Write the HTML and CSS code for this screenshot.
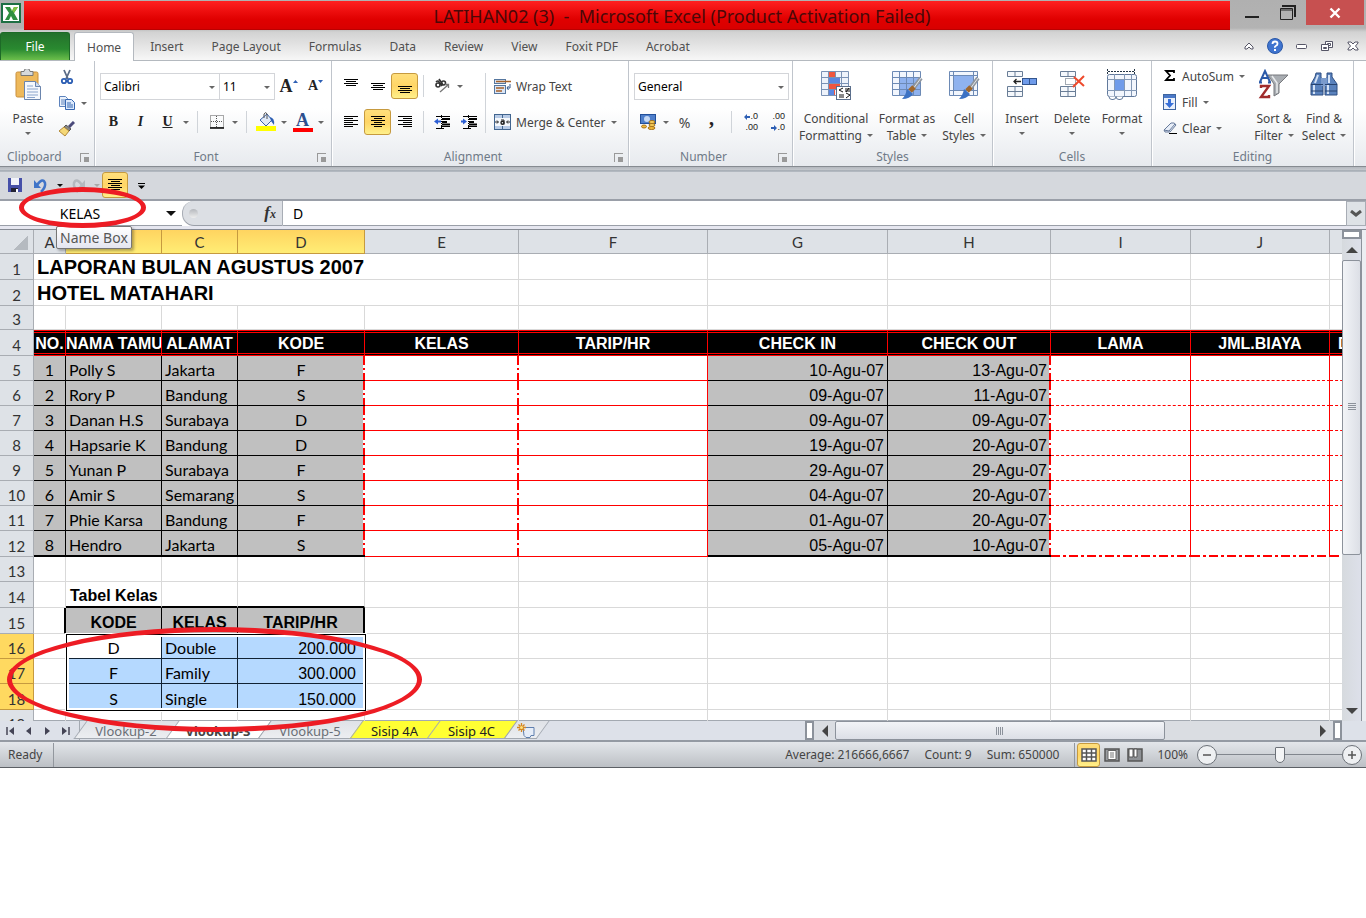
FILE: index.html
```html
<!DOCTYPE html>
<html lang="en">
<head>
    <meta charset="UTF-8">
    <meta name="viewport" content="width=device-width, initial-scale=1.0">
    <title>LATIHAN02 (3) - Microsoft Excel</title>
    <link rel="stylesheet" href="styles.css">
</head>
<body>
<div class="app">
    <header class="top">
        <div class="titlebar">
            <svg class="logo" width="24" height="24" viewBox="0 0 24 24"><rect x="2" y="4" width="18" height="18" fill="#fff" stroke="#1d7044" stroke-width="2"/><path d="M5 7h5l2 4 2-4h4l-4 6 4 7h-5l-2-4-2 4H5l4-7z" fill="#2f8f3f"/><path d="M10 7l2 4 2-4h4l-4 6z" fill="#7fc241"/></svg>
            <h1 class="title">LATIHAN02 (3)&nbsp; -&nbsp; Microsoft Excel (Product Activation Failed)</h1>
            <div class="window-buttons">
                <button class="win" aria-label="Minimize"><svg width="16" height="16"><path d="M1 12h14" stroke="#222" stroke-width="2"/></svg></button>
                <button class="win" aria-label="Restore"><svg width="16" height="16"><path d="M2 1h13v11" fill="none" stroke="#222" stroke-width="2"/><path d="M.5 3.500h12v11H.5zM0 5h12" fill="none" stroke="#222"/></svg></button>
                <button class="win close" aria-label="Close"><svg width="12" height="12"><path d="M1.500 1.500l9 9M10.500 1.500l-9 9" stroke="#fff" stroke-width="2.400"/></svg></button>
            </div>
        </div>
        <nav class="tabs">
            <button class="file">File</button>
            <button class="tab active">Home</button>
            <button class="tab">Insert</button>
            <button class="tab">Page Layout</button>
            <button class="tab">Formulas</button>
            <button class="tab">Data</button>
            <button class="tab">Review</button>
            <button class="tab">View</button>
            <button class="tab">Foxit PDF</button>
            <button class="tab">Acrobat</button>
            <div class="tab-tools">
                <button aria-label="Minimize ribbon"><svg width="10" height="8"><path d="M1 5l4-4 4 4v2H7L5 5 3 7H1z" fill="#fff" stroke="#556" /></svg></button>
                <button aria-label="Help"><svg width="16" height="16"><circle cx="8" cy="8" r="7.500" fill="#3f74cf" stroke="#2a58a8"/><path d="M5.500 6q0-2.500 2.500-2.500t2.500 2.200q0 1.300-1.500 2T8 9.700" fill="none" stroke="#fff" stroke-width="1.800"/><rect x="7" y="11" width="2" height="2" fill="#fff"/></svg></button>
                <button aria-label="Minimize window"><svg width="12" height="12"><rect x="1.500" y="4.500" width="10" height="4" rx="1" fill="#fff" stroke="#556"/></svg></button>
                <button aria-label="Restore window"><svg width="12" height="12"><path d="M4.500 1.500h7v6h-7z" fill="#fff" stroke="#556"/><path d="M6.500 3.500h3v2h-3z" fill="none" stroke="#556"/><path d="M.5 4.500h7v6h-7z" fill="#fff" stroke="#556"/><path d="M2.500 7.500h3v1h-3z" fill="none" stroke="#556"/></svg></button>
                <button aria-label="Close window"><svg width="12" height="12"><path d="M1 2h3l2 2 2-2h3v1L8.500 6 11 9v1H8L6 8l-2 2H1V9l2.500-3L1 3z" fill="#fff" stroke="#556"/></svg></button>
            </div>
        </nav>
    </header>

    <section class="ribbon">
        <div class="group g-clipboard">
            <div class="group-body">
                <button class="big">
                    <svg width="30" height="32" viewBox="0 0 30 32"><rect x="3" y="3" width="22" height="25" rx="1.500" fill="#eeb95b" stroke="#c98f3c"/><path d="M8 2.500h3a3 3 0 0 1 6 0h3v4H8z" fill="#d6d9dc" stroke="#777"/><path d="M11.500 12.500h11l5 5v13h-16z" fill="#f5f8fd" stroke="#6b85ad"/><path d="M22.500 12.500v5h5" fill="#cfdcf0" stroke="#6b85ad"/><path d="M14 17h6M14 20h11M14 23h11M14 26h11M14 28.500h8" stroke="#8aa4cc"/></svg>
                    <span>Paste</span><i class="caret"></i>
                </button>
                <div class="stack">
                    <button class="small" aria-label="Cut"><svg width="16" height="16"><path d="M5 1l4 9M11 1L7 10" stroke="#5a6b86" stroke-width="1.800"/><circle cx="5" cy="12" r="2.200" fill="none" stroke="#2d5fb4" stroke-width="1.800"/><circle cx="11" cy="12" r="2.200" fill="none" stroke="#2d5fb4" stroke-width="1.800"/></svg></button>
                    <button class="small" aria-label="Copy"><svg width="16" height="14"><path d="M.5.5h6l2 2v8h-8z" fill="#eaf1fb" stroke="#5d83bd"/><path d="M2 4h4M2 6h4M2 8h4" stroke="#5d83bd"/><path d="M6.500 3.500h6l3 3v7h-9z" fill="#dce9fb" stroke="#3566b0"/><path d="M8 7h4M8 9h6M8 11h6" stroke="#3566b0"/></svg><i class="caret"></i></button>
                    <button class="small" aria-label="Format Painter"><svg width="16" height="16"><path d="M15 1l-5 5" stroke="#4a4a7a" stroke-width="3"/><path d="M7 4l5 4-2 2-5-4z" fill="#888" stroke="#555"/><path d="M5 6l5 4-4 5-6-5z" fill="#f5d877" stroke="#b28a3a"/></svg></button>
                </div>
            </div>
            <div class="group-label"><span>Clipboard</span><button class="launcher" aria-label="Clipboard options"></button></div>
        </div>

        <div class="group g-font">
            <div class="group-body rows">
                <div class="row">
                    <label class="combo font-name"><select aria-label="Font"><option>Calibri</option></select></label>
                    <label class="combo font-size"><select aria-label="Font size"><option>11</option></select></label>
                    <button class="ib serif" aria-label="Grow font"><b class="grow">A</b><svg width="5" height="12"><path d="M0 3l2.500-3L5 3z" fill="#2d5fb4"/></svg></button>
                    <button class="ib serif" aria-label="Shrink font"><b class="shrink">A</b><svg width="5" height="12"><path d="M0 0h5L2.500 3z" fill="#2d5fb4"/></svg></button>
                </div>
                <div class="row">
                    <button class="ib serif"><b>B</b></button>
                    <button class="ib serif"><b><em>I</em></b></button>
                    <button class="ib serif"><b><u>U</u></b></button>
                    <button class="drop" aria-label="Underline styles"><i class="caret"></i></button>
                    <span class="sep"></span>
                    <button class="ib" aria-label="Borders"><svg width="14" height="14"><path d="M.5.5h13v12H.5zM6.500 1v11M1 6.500h12" fill="none" stroke="#555" stroke-dasharray="1 1"/><path d="M0 13h14" stroke="#000" stroke-width="1.500"/></svg></button>
                    <button class="drop" aria-label="Border styles"><i class="caret"></i></button>
                    <span class="sep"></span>
                    <button class="ib" aria-label="Fill color"><svg width="20" height="20"><path d="M4 8l7-6 5 6-6 6z" fill="#dfe9f8" stroke="#3a62a8"/><path d="M8 6V2q2-3 3 0v5" fill="none" stroke="#555"/><path d="M14 5q5 1 4 8l-3-4z" fill="#2d5fb4"/><rect y="14" width="20" height="5" fill="#ff0"/></svg></button>
                    <button class="drop" aria-label="Fill colors"><i class="caret"></i></button>
                    <button class="ib serif font-color" aria-label="Font color"><b>A</b></button>
                    <button class="drop" aria-label="Font colors"><i class="caret"></i></button>
                </div>
            </div>
            <div class="group-label"><span>Font</span><button class="launcher" aria-label="Font options"></button></div>
        </div>

        <div class="group g-align">
            <div class="group-body">
                <div class="rows">
                    <div class="row">
                        <button class="ib" aria-label="Top align"><svg width="14" height="18"><path d="M0 2.500h14M2 4.500h10M0 6.500h14M2 8.500h10" stroke="#000"/></svg></button>
                        <button class="ib" aria-label="Middle align"><svg width="14" height="18"><path d="M0 6.500h14M2 8.500h10M0 10.500h14M2 12.500h10" stroke="#000"/></svg></button>
                        <button class="ib on" aria-label="Bottom align"><svg width="14" height="18"><path d="M0 9.500h14M2 11.500h10M0 13.500h14M2 15.500h10" stroke="#000"/></svg></button>
                        <span class="sep"></span>
                        <button class="ib" aria-label="Orientation"><svg width="16" height="16"><circle cx="4" cy="7" r="2" fill="none" stroke="#333" stroke-width="1.600"/><path d="M2 4q2-2 3 0l3 4" fill="none" stroke="#333" stroke-width="1.600"/><circle cx="9.500" cy="5" r="2" fill="none" stroke="#333" stroke-width="1.600"/><path d="M5 1l4 6" stroke="#333" stroke-width="1.600"/><path d="M6 14l8-7M11 6.500h3.500V10" fill="none" stroke="#777" stroke-width="1.300"/></svg></button>
                        <button class="drop" aria-label="Orientation options"><i class="caret"></i></button>
                    </div>
                    <div class="row">
                        <button class="ib" aria-label="Align left"><svg width="14" height="14"><path d="M0 1.500h14M0 3.500h9M0 5.500h14M0 7.500h9M0 9.500h14M0 11.500h9" stroke="#000"/></svg></button>
                        <button class="ib on" aria-label="Align center"><svg width="14" height="14"><path d="M0 1.500h14M3 3.500h8M0 5.500h14M3 7.500h8M0 9.500h14M3 11.500h8" stroke="#000"/></svg></button>
                        <button class="ib" aria-label="Align right"><svg width="14" height="14"><path d="M0 1.500h14M5 3.500h9M0 5.500h14M5 7.500h9M0 9.500h14M5 11.500h9" stroke="#000"/></svg></button>
                        <span class="sep"></span>
                        <button class="ib" aria-label="Decrease indent"><svg width="16" height="14"><path d="M2 1.500h14M7 11.500h9M2 13.500h8" stroke="#000"/><path d="M8 4h8M8 7h5M8 9.500h8" stroke="#000" stroke-width="1.800"/><path d="M7.500 0v14" stroke="#000" stroke-dasharray="1 1"/><path d="M0 6.500l4-3v2h3v2H4v2z" fill="#2d5fd4"/></svg></button>
                        <button class="ib" aria-label="Increase indent"><svg width="16" height="14"><path d="M2 1.500h14M7 11.500h9M2 13.500h8" stroke="#000"/><path d="M8 4h8M8 7h5M8 9.500h8" stroke="#000" stroke-width="1.800"/><path d="M7.500 0v14" stroke="#000" stroke-dasharray="1 1"/><path d="M6 6.500l-4-3v2H0v2h2v2z" fill="#2d5fd4"/></svg></button>
                    </div>
                </div>
                <span class="sep tall"></span>
                <div class="rows">
                    <button class="small row"><svg width="17" height="16"><rect x=".5" y="1.500" width="11" height="4" fill="#dce6f5" stroke="#56779f"/><path d="M2 3.500h15" stroke="#a5622b" stroke-width="1.500"/><rect x=".5" y="7.500" width="11" height="8" fill="#dce6f5" stroke="#56779f"/><path d="M2 10h8M2 13h6" stroke="#a5622b" stroke-width="1.500"/><path d="M16 6v4h-3M14.500 8L13 10l1.500 2" fill="none" stroke="#33598e"/></svg>Wrap Text</button>
                    <button class="small row"><svg width="17" height="16"><rect x=".5" y=".5" width="16" height="15" fill="#b8cbe6" stroke="#41658f"/><path d="M8.500 0v16" stroke="#41658f"/><rect x="1" y="4" width="15" height="8" fill="#f5f8fc"/><path d="M1 8h3M13 8h3M3 6.500L4.500 8 3 9.500M14 6.500L12.500 8 14 9.500" stroke="#222" fill="none"/><circle cx="8.500" cy="8.700" r="1.500" fill="none" stroke="#222" stroke-width="1.400"/><path d="M7 6h3v4.500" fill="none" stroke="#222"/></svg>Merge &amp; Center<i class="caret"></i></button>
                </div>
            </div>
            <div class="group-label"><span>Alignment</span><button class="launcher" aria-label="Alignment options"></button></div>
        </div>

        <div class="group g-number">
            <div class="group-body rows">
                <div class="row"><label class="combo format"><select aria-label="Number format"><option>General</option></select></label></div>
                <div class="row">
                    <button class="ib" aria-label="Accounting format"><svg width="16" height="16"><rect x=".5" y=".5" width="15" height="9" fill="#4f7fcb" stroke="#23509a"/><circle cx="7" cy="5" r="3" fill="#c5d9f5"/><ellipse cx="11.500" cy="14" rx="3.500" ry="1.500" fill="#f0b83a" stroke="#a4721b"/><ellipse cx="12" cy="11" rx="3" ry="1.500" fill="#f7ce5b" stroke="#a4721b"/><ellipse cx="12" cy="8" rx="3" ry="1.500" fill="#f7ce5b" stroke="#a4721b"/><ellipse cx="4" cy="12.500" rx="2.500" ry="1.500" fill="#f0b83a" stroke="#a4721b"/></svg></button>
                    <button class="drop" aria-label="Currencies"><i class="caret"></i></button>
                    <button class="ib percent">%</button>
                    <button class="ib serif comma"><b>,</b></button>
                    <span class="sep"></span>
                    <button class="ib decimals"><span><svg width="6" height="6"><path d="M0 3l3-3v2h3v2H3v2z" fill="#2d5fb4"/></svg>.0</span><span>.00</span></button>
                    <button class="ib decimals"><span>.00</span><span><svg width="6" height="6"><path d="M6 3L3 0v2H0v2h3v2z" fill="#2d5fb4"/></svg>.0</span></button>
                </div>
            </div>
            <div class="group-label"><span>Number</span><button class="launcher" aria-label="Number options"></button></div>
        </div>

        <div class="group g-styles">
            <div class="group-body">
                <button class="big">
                    <svg width="32" height="32"><path d="M1.500 2.500h27v24h-27z" fill="#eef3fb"/><path d="M8 2h7v24H8z" fill="#f0563e"/><path d="M8 8h12v6H8z" fill="#5b87e0"/><path d="M8 15h12v5H8z" fill="#f0563e"/><path d="M8 21h6v6H8z" fill="#5b87e0"/><path d="M1.500 2.500h27v24h-27zM1 8.500h28M1 14.500h28M1 20.500h28M8.500 2v25M15.500 2v6M21.500 2v25" fill="none" stroke="#7a92b5"/><rect x="16.500" y="17.500" width="14" height="13" fill="#fff" stroke="#5b6f8c"/><path d="M23 19l-4 2 4 2M25 20h5M25 22h5M29 19l-3 4M19 26h5M19 28h5M26 24l4 2-4 3" fill="none" stroke="#111"/></svg>
                    <span>Conditional<br>Formatting<i class="caret"></i></span>
                </button>
                <button class="big">
                    <svg width="32" height="32"><path d="M1.500 2.500h28v24h-28z" fill="#f2f6fd"/><path d="M8 8h21v18H8z" fill="#8fb2ee"/><path d="M1.500 2.500h28v24h-28zM1 8.500h28M1 14.500h28M1 20.500h28M8.500 2v25M15.500 2v25M22.500 2v25" fill="none" stroke="#6d8ab5"/><path d="M30 9l-9 12" stroke="#9097a0" stroke-width="4"/><path d="M30 9l-8 11" stroke="#e4e7ea"/><path d="M23 18l-4 4" stroke="#a0672c" stroke-width="5"/><path d="M16 20l6 5q-3 5-11 5 4-4 5-10z" fill="#3c72c4"/></svg>
                    <span>Format as<br>Table<i class="caret"></i></span>
                </button>
                <button class="big">
                    <svg width="32" height="32"><path d="M1.500 2.500h28v24h-28z" fill="#f2f6fd" stroke="#6d8ab5"/><path d="M6 7h19v14H6z" fill="#8fb2ee"/><path d="M1 6.500h28M1 21.500h28M5.500 2v25M25.500 2v25" stroke="#6d8ab5"/><path d="M30 9l-9 12" stroke="#9097a0" stroke-width="4"/><path d="M30 9l-8 11" stroke="#e4e7ea"/><path d="M23 18l-4 4" stroke="#a0672c" stroke-width="5"/><path d="M16 20l6 5q-3 5-11 5 4-4 5-10z" fill="#3c72c4"/></svg>
                    <span>Cell<br>Styles<i class="caret"></i></span>
                </button>
            </div>
            <div class="group-label"><span>Styles</span></div>
        </div>

        <div class="group g-cells">
            <div class="group-body">
                <button class="big">
                    <svg width="32" height="32"><path d="M1.500 2.500h15v5h-15zM9 2v6M1.500 17.500h15v10h-15zM9 17v11M1 22.500h15" fill="#f5f8fc" stroke="#697d96"/><rect x="16.500" y="9.500" width="14" height="6" fill="#6f9bea" stroke="#33558d"/><path d="M23.500 9v7" stroke="#33558d"/><path d="M15 12.500H8M10.500 10L8 12.500l2.500 2.500" fill="none" stroke="#222" stroke-width="1.300"/></svg>
                    <span>Insert</span><i class="caret"></i>
                </button>
                <button class="big">
                    <svg width="32" height="32"><path d="M4.500 2.500h15v5h-15zM12 2v6M4.500 17.500h15v10h-15zM12 17v11M4 22.500h15" fill="#f5f8fc" stroke="#697d96"/><path d="M9.500 9.500h10v6h-10z" fill="none" stroke="#456" stroke-dasharray="1 1"/><path d="M18 8l10 9M28 7L17 18" stroke="#ee4a2c" stroke-width="2"/></svg>
                    <span>Delete</span><i class="caret"></i>
                </button>
                <button class="big">
                    <svg width="32" height="32"><path d="M2 2.500h26M1.500 0v5M28.500 0v5" stroke="#234" stroke-dasharray="2 1"/><rect x="1.500" y="5.500" width="29" height="22" rx="2" fill="#f2f6fd" stroke="#61799b"/><path d="M1 10.500h30M1 21.500h30M8.500 5v22M18.500 5v22M25.500 5v22" stroke="#8398b5"/><path d="M9 11h9v10H9z" fill="#6f9bea"/><path d="M3 27.500q0 3 3 3h1q3 0 3-3M10 27.500q0 3 3 3h1q3 0 3-3" fill="#fff" stroke="#61799b"/></svg>
                    <span>Format</span><i class="caret"></i>
                </button>
            </div>
            <div class="group-label"><span>Cells</span></div>
        </div>

        <div class="group g-editing">
            <div class="group-body">
                <div class="stack">
                    <button class="small"><svg width="14" height="14"><path d="M11 4V2H3l4 4.500L3 11h8V9" fill="none" stroke="#000" stroke-width="1.800"/></svg>AutoSum<i class="caret"></i></button>
                    <button class="small"><svg width="14" height="16"><rect x=".5" y=".5" width="12" height="15" fill="#e9f0fb" stroke="#3e659f"/><rect x="1" y="1" width="11" height="3" fill="#4b79c8"/><path d="M5 5h3v4h3l-4.500 5L2 9h3z" fill="#3870d8"/></svg>Fill<i class="caret"></i></button>
                    <button class="small"><svg width="14" height="14"><path d="M1 9l7-7q4-1 5 2L7 11H2z" fill="#e8eef8" stroke="#66799a"/><path d="M1 9l5 1 6-7" fill="none" stroke="#66799a"/><path d="M6 12.500h8" stroke="#000"/></svg>Clear<i class="caret"></i></button>
                </div>
                <button class="big">
                    <svg width="32" height="32"><path d="M10 6h20l-9 9v9l-5 3V15z" fill="#a9adb2" stroke="#77797d"/><path d="M14 7l5 7v10" fill="none" stroke="#e9ebed" stroke-width="1.500"/><path d="M2 13L7 2l5 11M4 9h6M1 13.500h3M10 13.500h3" fill="none" stroke="#2c5aa8" stroke-width="2"/><path d="M3 19v-2h8L3 28h8v-2" fill="none" stroke="#a02c2c" stroke-width="2.400"/></svg>
                    <span>Sort &amp;<br>Filter<i class="caret"></i></span>
                </button>
                <button class="big">
                    <svg width="32" height="32"><path d="M8 4h5v4l2 7v11H3V15l4-7zM19 4h5v4l5 7v11H17V15l2-7z" fill="#5a82bd" stroke="#2f4f82"/><path d="M13 9h6v8h-6z" fill="#7b9bcc"/><path d="M6 16v9M20 16v9M10 6l-3 8M21 6v8" stroke="#d5e3f6" stroke-width="2"/><path d="M3 15.500h12M17 15.500h12M3 22h12M17 22h12" stroke="#27436f"/></svg>
                    <span>Find &amp;<br>Select<i class="caret"></i></span>
                </button>
            </div>
            <div class="group-label"><span>Editing</span></div>
        </div>
    </section>

    <div class="quick">
        <button aria-label="Save"><svg width="16" height="16"><path d="M1 1h14v14H1z" fill="#4650a8"/><path d="M4 1h8v7H4z" fill="#f2f4fb"/><path d="M4 11h7v4H4z" fill="#223"/><path d="M9 12h2v3H9z" fill="#fff"/></svg></button>
        <button aria-label="Undo"><svg width="16" height="16"><path d="M4 8q6-8 8-2 1 4-4 9" fill="none" stroke="#3f74c8" stroke-width="2.500"/><path d="M1 3v8h7z" fill="#3f74c8"/></svg></button>
        <button class="drop" aria-label="Undo list"><i class="caret dark"></i></button>
        <button aria-label="Redo"><svg width="16" height="16"><path d="M12 8Q6 0 4 6q-1 4 4 9" fill="none" stroke="#b5b9bf" stroke-width="2.500"/><path d="M15 3v8H8z" fill="#b5b9bf"/></svg></button>
        <button class="drop" aria-label="Redo list"><i class="caret faint"></i></button>
        <button class="on" aria-label="Center"><svg width="16" height="14"><path d="M1 1.500h14M4 3.500h9M1 5.500h14M4 7.500h9M1 9.500h14M4 11.500h9" stroke="#000"/></svg></button>
        <button aria-label="Customize toolbar"><svg width="7" height="7"><path d="M0 1.500h7" stroke="#000"/><path d="M0 3.500h7L3.500 7z"/></svg></button>
    </div>

    <div class="formula-bar">
        <input class="name-box" type="text" value="KELAS" aria-label="Name Box">
        <button class="name-drop" aria-label="Names"><i class="caret dark wide"></i></button>
        <div class="fx"><i class="knob"></i><button aria-label="Insert function"><em>f<small>x</small></em></button></div>
        <input class="formula" type="text" value="D" aria-label="Formula">
        <button class="expand" aria-label="Expand formula bar"><svg width="12" height="8"><path d="M1 1l5 4 5-4" fill="none" stroke="#555" stroke-width="3"/></svg></button>
        <div class="tooltip">Name Box</div>
        <div class="ring ring-name"></div>
    </div>

    <main class="workspace">
        <div class="sheet">
            <table>
                <colgroup><col class="w-head"><col class="w-a"><col class="w-b"><col class="w-c"><col class="w-d"><col class="w-e"><col class="w-f"><col class="w-g"><col class="w-h"><col class="w-i"><col class="w-j"><col class="w-k"></colgroup>
                <thead>
                    <tr><th class="corner"></th><th>A</th><th class="sel"></th><th class="sel">C</th><th class="sel">D</th><th>E</th><th>F</th><th>G</th><th>H</th><th>I</th><th>J</th><th></th></tr>
                </thead>
                <tbody>
                    <tr class="tall"><th>1</th><td class="heading" colspan="5">LAPORAN BULAN AGUSTUS 2007</td><td></td><td></td><td></td><td></td><td></td><td></td></tr>
                    <tr class="tall"><th>2</th><td class="heading" colspan="5">HOTEL MATAHARI</td><td></td><td></td><td></td><td></td><td></td><td></td></tr>
                    <tr class="short"><th>3</th><td></td><td></td><td></td><td></td><td></td><td></td><td></td><td></td><td></td><td></td><td></td></tr>
                    <tr class="titles"><th>4</th><td>NO.</td><td>NAMA TAMU</td><td>ALAMAT</td><td>KODE</td><td>KELAS</td><td>TARIP/HR</td><td>CHECK IN</td><td>CHECK OUT</td><td>LAMA</td><td>JML.BIAYA</td><td class="cut">D</td></tr>
                    <tr class="guest"><th>5</th><td>1</td><td>Polly S</td><td>Jakarta</td><td>F</td><td></td><td></td><td>10-Agu-07</td><td>13-Agu-07</td><td></td><td></td><td></td></tr>
                    <tr class="guest"><th>6</th><td>2</td><td>Rory P</td><td>Bandung</td><td>S</td><td></td><td></td><td>09-Agu-07</td><td>11-Agu-07</td><td></td><td></td><td></td></tr>
                    <tr class="guest"><th>7</th><td>3</td><td>Danan H.S</td><td>Surabaya</td><td>D</td><td></td><td></td><td>09-Agu-07</td><td>09-Agu-07</td><td></td><td></td><td></td></tr>
                    <tr class="guest"><th>8</th><td>4</td><td>Hapsarie K</td><td>Bandung</td><td>D</td><td></td><td></td><td>19-Agu-07</td><td>20-Agu-07</td><td></td><td></td><td></td></tr>
                    <tr class="guest"><th>9</th><td>5</td><td>Yunan P</td><td>Surabaya</td><td>F</td><td></td><td></td><td>29-Agu-07</td><td>29-Agu-07</td><td></td><td></td><td></td></tr>
                    <tr class="guest"><th>10</th><td>6</td><td>Amir S</td><td>Semarang</td><td>S</td><td></td><td></td><td>04-Agu-07</td><td>20-Agu-07</td><td></td><td></td><td></td></tr>
                    <tr class="guest"><th>11</th><td>7</td><td>Phie Karsa</td><td>Bandung</td><td>F</td><td></td><td></td><td>01-Agu-07</td><td>20-Agu-07</td><td></td><td></td><td></td></tr>
                    <tr class="guest last tall"><th>12</th><td>8</td><td>Hendro</td><td>Jakarta</td><td>S</td><td></td><td></td><td>05-Agu-07</td><td>10-Agu-07</td><td></td><td></td><td></td></tr>
                    <tr><th>13</th><td></td><td></td><td></td><td></td><td></td><td></td><td></td><td></td><td></td><td></td><td></td></tr>
                    <tr class="caption tall"><th>14</th><td></td><td>Tabel Kelas</td><td></td><td></td><td></td><td></td><td></td><td></td><td></td><td></td><td></td></tr>
                    <tr class="class-titles tall"><th>15</th><td></td><td>KODE</td><td>KELAS</td><td>TARIP/HR</td><td></td><td></td><td></td><td></td><td></td><td></td><td></td></tr>
                    <tr class="class-row"><th class="sel">16</th><td></td><td class="current">D</td><td>Double</td><td>200.000</td><td></td><td></td><td></td><td></td><td></td><td></td><td></td></tr>
                    <tr class="class-row"><th class="sel">17</th><td></td><td>F</td><td>Family</td><td>300.000</td><td></td><td></td><td></td><td></td><td></td><td></td><td></td></tr>
                    <tr class="class-row tall"><th class="sel">18</th><td></td><td>S</td><td>Single</td><td>150.000</td><td></td><td></td><td></td><td></td><td></td><td></td><td></td></tr>
                    <tr><th>19</th><td></td><td></td><td></td><td></td><td></td><td></td><td></td><td></td><td></td><td></td><td></td></tr>
                </tbody>
            </table>
            <div class="selection"></div>
        </div>
        <div class="vscroll">
            <span class="split"></span>
            <button aria-label="Scroll up"><i class="arrow up"></i></button>
            <div class="thumb"><i class="grip"></i></div>
            <span class="track"></span>
            <button aria-label="Scroll down"><i class="arrow down"></i></button>
        </div>
        <div class="ring ring-table"></div>
    </main>

    <div class="sheet-bar">
        <div class="sheet-nav">
            <button aria-label="First sheet"><svg width="8" height="8"><path d="M1 0v8" stroke="#445" stroke-width="1.500"/><path d="M8 0v8L3 4z" fill="#445"/></svg></button>
            <button aria-label="Previous sheet"><svg width="8" height="8"><path d="M6 0v8L1 4z" fill="#445"/></svg></button>
            <button aria-label="Next sheet"><svg width="8" height="8"><path d="M2 0v8l5-4z" fill="#445"/></svg></button>
            <button aria-label="Last sheet"><svg width="8" height="8"><path d="M7 0v8" stroke="#445" stroke-width="1.500"/><path d="M0 0v8l5-4z" fill="#445"/></svg></button>
        </div>
        <div class="sheet-tabs">
            <button class="wide">Vlookup-2</button>
            <button class="wide current">Vlookup-3</button>
            <button class="wide">Vlookup-5</button>
            <button class="yellow">Sisip 4A</button>
            <button class="yellow">Sisip 4C</button>
            <button class="new" aria-label="Insert sheet"><svg width="18" height="16"><path d="M6 4.500h11v8h-3l-1 2H9l-2-2z" fill="#e6edf8" stroke="#5f7fae"/><path d="M4.500 0v9M0 4.500h9M1.500 1.500l6 6M7.500 1.500l-6 6" stroke="#d6861f" stroke-width="1.300"/><circle cx="4.500" cy="4.500" r="1.500" fill="#ffe27a"/></svg></button>
        </div>
        <div class="hscroll">
            <span class="split"></span>
            <button aria-label="Scroll left"><i class="arrow left"></i></button>
            <div class="thumb"><i class="grip"></i></div>
            <span class="track"></span>
            <button aria-label="Scroll right"><i class="arrow right"></i></button>
            <span class="split"></span>
        </div>
    </div>

    <footer class="status">
        <span class="ready">Ready</span>
        <span class="stat">Average: 216666,6667</span>
        <span class="stat">Count: 9</span>
        <span class="stat">Sum: 650000</span>
        <div class="views">
            <button class="on" aria-label="Normal"><svg width="16" height="14"><path d="M1 1h14v12H1zM1 5h14M1 9h14M5.500 1v12M10.500 1v12" fill="#fff" stroke="#555" stroke-width="1.500"/></svg></button>
            <button aria-label="Page layout"><svg width="16" height="14"><path d="M1 1h14v12H1z" fill="#9a9da1" stroke="#555" stroke-width="1.500"/><path d="M4 2.500h8v9H4z" fill="#fff" stroke="#666"/><path d="M6 5h4M6 7h4M6 9h4" stroke="#777"/></svg></button>
            <button aria-label="Page break"><svg width="16" height="14"><path d="M1 1h14v12H1z" fill="#8e9195" stroke="#555" stroke-width="1.500"/><path d="M2 1h4v8H2zM7 1h3v8H7z" fill="#fff" stroke="#555"/></svg></button>
        </div>
        <span class="zoom">100%</span>
        <button class="round" aria-label="Zoom out"><svg width="10" height="10"><path d="M1 5h8" stroke="#555" stroke-width="1.500"/></svg></button>
        <input class="slider" type="range" min="0" max="100" value="50" aria-label="Zoom">
        <button class="round" aria-label="Zoom in"><svg width="10" height="10"><path d="M1 5h8M5 1v8" stroke="#555" stroke-width="1.500"/></svg></button>
    </footer>
</div>
</body>
</html>
```
FILE: styles.css
```css
* {
    box-sizing: border-box;
}

body {
    margin: 0;
    background: #fff;
    font-family: "Noto Sans", sans-serif;
    font-size: 12px;
    color: #444;
}

button {
    display: flex;
    align-items: center;
    justify-content: center;
    padding: 0;
    border: 0;
    background: none;
    font: inherit;
    color: inherit;
    white-space: nowrap;
}

svg {
    display: block;
    flex: none;
}

.app {
    overflow: hidden;
}

/* title bar and ribbon tabs */
.top {
    background: linear-gradient(#b0b0b0 0, #b3b3b3 28px, #d2d2d2 32px, #f7f7f7 60px);
}

.titlebar {
    display: flex;
    height: 31px;
}

.title {
    flex: 1;
    height: 29px;
    margin: 1px 0 0;
    background: linear-gradient(#ff2020, #e00000 65%, #d80000);
    border-bottom: 1px solid #b00;
    color: #4a0808;
    font-size: 18px;
    font-weight: 400;
    line-height: 30px;
    text-align: center;
    white-space: nowrap;
    padding-left: 110px;
}

.window-buttons {
    display: flex;
    width: 136px;
    padding-left: 4px;
}

.win {
    width: 36px;
    height: 25px;
}

.win.close {
    width: 58px;
    background: #c75050;
}

.tabs {
    display: flex;
    height: 30px;
    padding-top: 1px;
    border-bottom: 1px solid #b4b9bf;
    color: #505050;
}

.file {
    width: 70px;
    margin-right: 4px;
    background: linear-gradient(#23702b, #2a8a30 60%, #6cbf4b);
    border: 1px solid #1d6a27;
    border-bottom: 0;
    border-radius: 3px 3px 0 0;
    color: #fff;
}

.tab {
    padding: 0 14px;
}

.tab.active {
    margin: 0 2px -1px 0;
    padding: 0 12px;
    background: #fff;
    border: 1px solid #b4b9bf;
    border-bottom: 0;
    border-radius: 3px 3px 0 0;
}

.tab-tools {
    display: flex;
    margin-left: auto;
}

.tab-tools button {
    width: 26px;
}

/* ribbon */
.ribbon {
    display: flex;
    height: 106px;
    background: linear-gradient(#fff 0, #fff 45%, #e7eaee 100%);
    border-bottom: 1px solid #868b91;
    white-space: nowrap;
}

.group {
    display: flex;
    flex: none;
    flex-direction: column;
    border-right: 1px solid #c0c5cc;
    box-shadow: 1px 0 #fff;
}

.g-clipboard { width: 95px; }
.g-font { width: 237px; }
.g-align { width: 297px; }
.g-number { width: 164px; }
.g-styles { width: 200px; }
.g-cells { width: 159px; }
.g-editing { width: 202px; }

.group-body {
    display: flex;
    flex: 1;
    padding-left: 5px;
}

.group-label {
    display: flex;
    align-items: center;
    height: 20px;
    color: #6f7a87;
}

.group-label span {
    flex: 1;
    text-align: center;
}

.g-clipboard .group-label span {
    padding-left: 7px;
    text-align: left;
}

.launcher {
    width: 9px;
    height: 9px;
    margin: 2px 5px 0 0;
    border: solid #999;
    border-width: 1px 0 0 1px;
    background: linear-gradient(#999, #999) right bottom / 5px 5px no-repeat;
}

.rows {
    display: flex;
    flex-direction: column;
    gap: 10px;
    padding-top: 12px;
}

.row {
    display: flex;
    align-items: center;
    height: 26px;
}

.ib {
    width: 27px;
    height: 26px;
    border: 1px solid transparent;
    border-radius: 3px;
}

.on {
    background: linear-gradient(#ffdf7c, #ffd566 50%, #fff08a);
    border: 1px solid #c69a3f;
    border-radius: 3px;
}

.drop {
    width: 10px;
    height: 26px;
}

.caret {
    flex: none;
    border: 3px solid transparent;
    border-top-color: #666;
    border-bottom: 0;
}

.caret.dark { border-top-color: #111; }
.caret.faint { border-top-color: #aaa; }

.caret.wide {
    border-width: 5px;
    border-bottom: 0;
}

.sep {
    width: 12px;
    height: 22px;
    background: linear-gradient(#d0d4d9, #d0d4d9) center / 1px 100% no-repeat;
}

.g-align .sep {
    width: 10px;
}

.g-align .sep.tall {
    width: 6px;
    height: 60px;
    margin: 12px 6px 0 0;
}

.combo {
    position: relative;
    flex: none;
    height: 27px;
    border: 1px solid #d3d5d9;
    background: #fff;
}

.combo::after {
    content: "";
    position: absolute;
    right: 4px;
    top: 12px;
    border: 3px solid transparent;
    border-top-color: #666;
    border-bottom: 0;
}

.combo select {
    appearance: none;
    width: 100%;
    height: 25px;
    padding: 0 3px;
    border: 0;
    background: none;
    color: #000;
    font: inherit;
}

.font-name { width: 120px; }

.font-size {
    width: 55px;
    border-left: 0;
}

.format { width: 155px; }

.serif {
    font-family: "Liberation Serif", serif;
    font-size: 14px;
    color: #222;
}

.grow { font-size: 18px; }
.shrink { font-size: 14px; }

.font-color b {
    width: 20px;
    border-bottom: 4px solid #f00;
    color: #2d4f8e;
    font-size: 18px;
    line-height: 16px;
}

.percent {
    font-size: 14px;
}

.comma {
    font-size: 20px;
    line-height: 10px;
    padding-bottom: 8px;
}

.decimals {
    flex-direction: column;
    align-items: flex-end;
    padding-right: 5px;
    font-family: "Liberation Sans", Arial, sans-serif;
    font-size: 9px;
    line-height: 11px;
    color: #222;
}

.decimals span {
    display: flex;
    align-items: center;
}

.big {
    flex-direction: column;
    justify-content: flex-start;
    width: 50px;
    padding-top: 8px;
    line-height: 17px;
}

.big span {
    padding-top: 9px;
}

.big span .caret {
    display: inline-block;
    margin-left: 5px;
    vertical-align: 3px;
}

.big > .caret {
    margin-top: 5px;
}

.g-clipboard .big {
    width: 46px;
}

.stack {
    display: flex;
    flex-direction: column;
    padding-top: 3px;
}

.small {
    justify-content: flex-start;
    height: 26px;
    gap: 5px;
}

.g-clipboard .stack {
    padding: 3px 0 0 8px;
}

.g-clipboard .small {
    gap: 6px;
}

.g-styles .group-body {
    padding-left: 7px;
}

.g-styles .big { width: 72px; }
.g-styles .big:nth-child(2) { width: 70px; }
.g-styles .big:nth-child(3) { width: 44px; }

.g-cells .group-body {
    padding-left: 4px;
}

.g-editing .stack {
    width: 92px;
    padding: 2px 0 0 6px;
}

/* quick access toolbar */
.quick {
    display: flex;
    align-items: center;
    height: 34px;
    padding: 4px 0 0 2px;
    background: linear-gradient(#b3b7bd 0, #c4c8cd 3px, #8f98a2 4px, #d5d8dd 5px);
    border-bottom: 2px solid #9a9fa8;
}

.quick button {
    width: 26px;
    height: 26px;
}

.quick .drop {
    width: 11px;
}

/* formula bar */
.formula-bar {
    position: relative;
    display: flex;
    height: 29px;
    border-bottom: 1px solid #868b94;
    background: linear-gradient(#e6e7f0, #e6e7f0) bottom / 100% 3px no-repeat;
}

.formula-bar > input,
.formula-bar > button,
.fx {
    height: 25px;
    border: 0;
    border-bottom: 1px solid #9a9fa8;
    background: #fff;
}

.name-box {
    width: 160px;
    padding: 0;
    font: 14px "Noto Sans", sans-serif;
    text-align: center;
    color: #000;
}

.name-drop {
    width: 22px;
}

.formula-bar .fx {
    display: flex;
    align-items: center;
    justify-content: space-between;
    width: 101px;
    padding: 0 6px;
    background: #dcdfe4;
    border-left: 1px solid #a8adb5;
    border-right: 1px solid #a8adb5;
    border-radius: 12px 0 0 12px;
}

.fx button {
    font: bold 17px "Liberation Serif", serif;
    color: #333;
}

.fx small {
    font-size: 12px;
}

.knob {
    width: 9px;
    height: 9px;
    border-radius: 50%;
    background: linear-gradient(#b5b8bd, #eee);
}

.formula-bar .formula {
    flex: 1;
    min-width: 0;
    padding: 0 10px;
    font: 14px "Noto Sans", sans-serif;
    color: #000;
}

.formula-bar .expand {
    width: 20px;
    background: #dee2e6;
    border: 1px solid #a8adb5;
}

.tooltip {
    position: absolute;
    z-index: 2;
    left: 56px;
    top: 25px;
    padding: 0 3px;
    background: linear-gradient(#fff, #e4e5f0);
    border: 1px solid #767676;
    border-radius: 2px;
    box-shadow: 2px 2px 3px rgba(0, 0, 0, 0.3);
    color: #575757;
    font-size: 14px;
    line-height: 21px;
    white-space: nowrap;
}

.ring {
    position: absolute;
    z-index: 3;
    border: 5px solid #ed1c24;
    border-radius: 50%;
    pointer-events: none;
}

.ring-name {
    left: 19px;
    top: -14px;
    width: 127px;
    height: 41px;
}

.ring-table {
    left: 7px;
    top: 397px;
    width: 415px;
    height: 105px;
}

/* worksheet */
.workspace {
    position: relative;
    display: flex;
    height: 491px;
}

.sheet {
    position: relative;
    flex: 1;
    min-width: 0;
    overflow: hidden;
}

table {
    width: 1394px;
    table-layout: fixed;
    border-collapse: separate;
    border-spacing: 0;
    font-family: Lato, sans-serif;
    font-size: 16px;
    line-height: 20px;
    color: #000;
}

.w-head { width: 34px; }
.w-a { width: 32px; }
.w-b { width: 96px; }
.w-c { width: 76px; }
.w-d { width: 127px; }
.w-e { width: 154px; }
.w-f { width: 189px; }
.w-g { width: 180px; }
.w-h { width: 163px; }
.w-i { width: 140px; }
.w-j { width: 139px; }
.w-k { width: 64px; }

tr { height: 25px; }
tr.tall { height: 26px; }
tr.short { height: 24px; }
thead tr { height: 24px; }

td,
th {
    padding: 0 3px;
    border: solid #d9d9d9;
    border-width: 0 1px 1px 0;
    overflow: hidden;
    white-space: nowrap;
    vertical-align: bottom;
}

th {
    padding: 0;
    background: #dee2e7;
    border-color: #a9adb3;
    color: #333;
    font-size: 15px;
    font-weight: 400;
    text-align: center;
}

thead th {
    vertical-align: middle;
}

th.sel {
    background: #ffd960;
    border-color: #c69a3f;
}

thead th.sel {
    background: linear-gradient(#ffd460, #ffed75);
}

.corner {
    background: linear-gradient(135deg, transparent 50%, #b5bac0 50%) 14px 6px / 14px 14px no-repeat #dee2e7;
}

.heading,
.titles td,
.caption td,
.class-titles td {
    font-family: "Liberation Sans", Arial, sans-serif;
    font-weight: 700;
}

.heading {
    font-size: 20px;
    line-height: 24px;
    vertical-align: middle;
}

.titles {
    height: 26px;
}

.titles td {
    padding: 2px 0 0;
    background: #000;
    border-color: #f00;
    border-style: double solid double solid;
    border-width: 3px 1px 3px 0;
    color: #fff;
    font-size: 16px;
    line-height: 18px;
    text-align: center;
    vertical-align: middle;
}

.titles td.cut {
    padding-left: 8px;
    text-align: left;
}

/* guest rows: filled columns are grey, the others wait for formulas */
.guest td {
    background-color: #c0c0c0;
    border-color: #000;
}

.guest td:nth-child(2),
.guest td:nth-child(5) {
    text-align: center;
}

.guest td:nth-child(6),
.guest td:nth-child(7),
.guest td:nth-child(n+10) {
    background-color: #fff;
    border-color: #f00;
}

.guest td:nth-child(n+10) {
    border-bottom-style: dashed;
}

.guest td:nth-child(8),
.guest td:nth-child(9) {
    font-family: "Liberation Sans", Arial, sans-serif;
    line-height: 18px;
    text-align: right;
}

.guest td:nth-child(5),
.guest td:nth-child(6),
.guest td:nth-child(9) {
    padding-right: 4px;
    border-right: 0;
    background-image: repeating-linear-gradient(#f00 0 9px, #fff 9px 12px, #f00 12px 14px, #fff 14px 17px);
    background-position: right;
    background-repeat: no-repeat;
    background-size: 2px 100%;
}

.guest.last td {
    border-bottom-width: 2px;
}

.guest.last td:nth-child(6),
.guest.last td:nth-child(7) {
    border-bottom-width: 1px;
}

.guest.last td:nth-child(n+10) {
    border-bottom: 0;
    background-image: repeating-linear-gradient(90deg, #f00 0 9px, #fff 9px 12px, #f00 12px 15px, #fff 15px 18px);
    background-position: bottom;
    background-repeat: no-repeat;
    background-size: 100% 2px;
}

/* class lookup table */
.caption td {
    padding-left: 4px;
}

.caption td:nth-child(3),
.caption td:nth-child(4),
.caption td:nth-child(5) {
    border-bottom: 2px solid #000;
}

.class-titles td:nth-child(3),
.class-titles td:nth-child(4),
.class-titles td:nth-child(5) {
    background: #c0c0c0;
    border-right-color: #000;
    text-align: center;
}

.class-titles td:nth-child(2) {
    border-right: 2px solid #000;
}

.class-titles td:nth-child(5) {
    border-right-width: 2px;
}

.class-row td:nth-child(3),
.class-row td:nth-child(4),
.class-row td:nth-child(5) {
    background: #b5d9ff;
    border-color: #123;
}

.class-row td:nth-child(3) {
    text-align: center;
}

.class-row td:nth-child(5) {
    padding-right: 8px;
    font-family: "Liberation Sans", Arial, sans-serif;
    line-height: 18px;
    text-align: right;
}

.class-row td.current:nth-child(3) {
    background: #fff;
}

.selection {
    position: absolute;
    left: 66px;
    top: 404px;
    width: 300px;
    height: 77px;
    border: 1px solid #000;
    box-shadow: 0 0 0 1px #fff, inset 0 0 0 2px #fff;
}

/* scroll bars */
.vscroll {
    display: flex;
    flex-direction: column;
    width: 24px;
    padding-right: 4px;
    background: linear-gradient(90deg, #d6dade, #dde0ea 19px, #8c929b 19px, #8c929b 20px, #eceef2 20px);
}

.split {
    flex: none;
    width: 9px;
    height: 19px;
    background: #fff;
    border: 2px solid #8c929b;
}

.vscroll .split {
    width: 19px;
    height: 9px;
}

.vscroll button {
    width: 19px;
    height: 21px;
}

.track {
    flex: 1;
}

.thumb {
    display: flex;
    align-items: center;
    justify-content: center;
    border: 1px solid #8c929b;
    border-radius: 2px;
}

.vscroll .thumb {
    width: 19px;
    height: 60%;
    background: linear-gradient(90deg, #f2f4f7, #dcdfe6);
}

.grip {
    width: 8px;
    height: 8px;
    background: repeating-linear-gradient(#8c929b 0 1px, transparent 1px 2px);
}

.hscroll .grip {
    background: repeating-linear-gradient(90deg, #8c929b 0 1px, transparent 1px 2px);
}

.arrow {
    border: 6px solid transparent;
}

.arrow.up { border-top: 0; border-bottom-color: #444; }
.arrow.down { border-bottom: 0; border-top-color: #444; }
.arrow.left { border-left: 0; border-right-color: #444; }
.arrow.right { border-right: 0; border-left-color: #444; }

.sheet-bar {
    display: flex;
    height: 22px;
    background: #dde1e9;
    border-top: 1px solid #a3a9b1;
    border-bottom: 2px solid #949aa3;
    margin-top: -1px;
}

.sheet-nav {
    display: flex;
    width: 80px;
    padding: 0 4px 0 1px;
    border-right: 1px solid #a3a9b1;
}

.sheet-nav button {
    flex: 1;
}

.sheet-tabs {
    display: flex;
    color: #6a6f76;
    font-size: 13px;
}

/* the slanted shape sits behind the upright label */
.sheet-tabs button {
    position: relative;
    z-index: 0;
    width: 77px;
}

.sheet-tabs button::before {
    content: "";
    position: absolute;
    z-index: -1;
    inset: 0 -1px 1px 0;
    background: linear-gradient(#dfe2e7, #eceef1);
    border: solid #a3a9b1;
    border-width: 0 1px 1px;
    transform: skewX(-36deg);
}

.sheet-tabs button.wide {
    width: 92px;
}

.sheet-tabs .current {
    color: #444;
    font-weight: 700;
}

.sheet-tabs .current::before {
    background: #fff;
}

.sheet-tabs .yellow {
    color: #222;
}

.sheet-tabs .yellow::before {
    background: #ff3;
}

.sheet-tabs .new {
    width: 32px;
}

.hscroll {
    display: flex;
    width: 537px;
    margin: 0 24px 0 auto;
    background: #dadde2;
}

.hscroll button {
    width: 21px;
}

.hscroll .thumb {
    width: 330px;
    background: linear-gradient(#f2f4f7, #dcdfe6);
}

/* status bar */
.status {
    display: flex;
    align-items: center;
    height: 26px;
    padding-right: 4px;
    background: linear-gradient(#e3e6ea, #bcc0c5);
    border-bottom: 1px solid #5c6065;
}

.ready {
    width: 54px;
    padding-left: 8px;
    margin-right: auto;
    border-right: 1px solid #92979e;
    line-height: 24px;
}

.stat {
    padding-right: 15px;
}

.views {
    display: flex;
    padding-left: 2px;
    border-left: 1px solid #92979e;
}

.views button {
    width: 23px;
    height: 24px;
}

.zoom {
    padding: 0 9px 0 11px;
}

.round {
    width: 20px;
    height: 20px;
    border: 1px solid #6c7178;
    border-radius: 50%;
    background: #eef0f2;
}

.slider {
    appearance: none;
    width: 125px;
    height: 20px;
    margin: 0;
    background: linear-gradient(#81868d, #81868d) center / 100% 1px no-repeat;
}

.slider::-webkit-slider-thumb {
    appearance: none;
    width: 10px;
    height: 16px;
    border: 1px solid #6c7178;
    border-radius: 1px 1px 5px 5px;
    background: #f4f5f6;
}
```
